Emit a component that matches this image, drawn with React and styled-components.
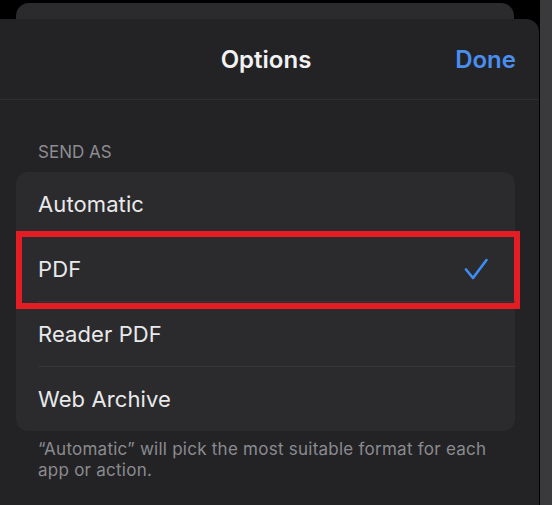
import { styled, createGlobalStyle } from "styled-components";

const GlobalStyle = createGlobalStyle`
  html, body {
    margin: 0;
    background: #000;
    overflow: hidden;
  }
  body {
    font-family: Inter, "Open Sans", "Liberation Sans", sans-serif;
    -webkit-font-smoothing: antialiased;
  }
`;

const formats = ["Automatic", "PDF", "Reader PDF", "Web Archive"];

const CheckIcon = () => (
  <svg width="24" height="24" viewBox="0 0 24 24" fill="none">
    <polyline
      points="2,12.5 9,21 22.5,3"
      stroke="#3e8cf5"
      strokeWidth="2.6"
      strokeLinecap="round"
      strokeLinejoin="round"
    />
  </svg>
);

export default function App() {
  return (
    <>
      <GlobalStyle />
      <Screen>
        <Stage>
          <BackCard />
          <Sheet>
            <Header>
              <span />
              <Title>Options</Title>
              <DoneButton>Done</DoneButton>
            </Header>
            <Section>
              <SectionLabel>Send as</SectionLabel>
              <Group>
                {formats.map((name) => (
                  <Row key={name} $highlight={name === "PDF"}>
                    <RowLabel>{name}</RowLabel>
                    {name === "PDF" && <CheckIcon />}
                  </Row>
                ))}
              </Group>
              <Footnote>
                “Automatic” will pick the most suitable format for each app or
                action.
              </Footnote>
            </Section>
          </Sheet>
        </Stage>
        <SideStrip />
      </Screen>
    </>
  );
}

const Screen = styled.div`
  display: flex;
  width: 552px;
  height: 505px;
  background: #000;
`;

const Stage = styled.div`
  flex: 1;
  display: flex;
  flex-direction: column;
  padding-top: 3px;
`;

const BackCard = styled.div`
  height: 16px;
  margin: 0 25px 0 16px;
  border-radius: 13px 13px 0 0;
  background: #2b2b2d;
`;

const Sheet = styled.div`
  flex: 1;
  background: #232325;
  border-radius: 0 13px 0 0;
`;

const Header = styled.div`
  display: grid;
  grid-template-columns: 1fr auto 1fr;
  align-items: center;
  height: 80px;
  padding: 0 23px 0 16px;
  border-bottom: 1px solid #2d2d2f;
`;

const Title = styled.h1`
  margin: 0;
  font-size: 24px;
  font-weight: 600;
  color: #f2f2f4;
`;

const DoneButton = styled.button`
  justify-self: end;
  border: none;
  background: none;
  padding: 0;
  font-family: inherit;
  font-size: 24px;
  font-weight: 600;
  color: #4a8ef0;
`;

const Section = styled.div`
  padding: 42px 24px 0 16px;
`;

const SectionLabel = styled.div`
  padding-left: 22px;
  font-size: 17px;
  line-height: 20px;
  text-transform: uppercase;
  color: #8c8c91;
  margin-bottom: 10px;
`;

const Group = styled.div`
  background: #2b2b2d;
  border-radius: 12px;
`;

const Row = styled.div`
  position: relative;
  display: flex;
  align-items: center;
  justify-content: space-between;
  height: 64px;
  margin-left: 22px;
  padding-right: 27px;
  border-top: 1px solid #363638;

  &:first-child {
    border-top: none;
  }

  ${({ $highlight }) =>
    $highlight &&
    `
    &::after {
      content: "";
      position: absolute;
      top: -6px;
      bottom: -8px;
      left: -22px;
      right: -5px;
      border: 6px solid #e31d23;
      pointer-events: none;
    }
  `}
`;

const RowLabel = styled.span`
  font-size: 22px;
  letter-spacing: 0.1px;
  color: #e9e9eb;
`;

const Footnote = styled.p`
  margin: 8px 0 0;
  padding: 0 20px 0 22px;
  font-size: 17px;
  line-height: 21px;
  letter-spacing: 0.25px;
  color: #8b8b90;
`;

const SideStrip = styled.div`
  width: 12px;
  margin-left: 1px;
  background: #3a3a3c;
`;
